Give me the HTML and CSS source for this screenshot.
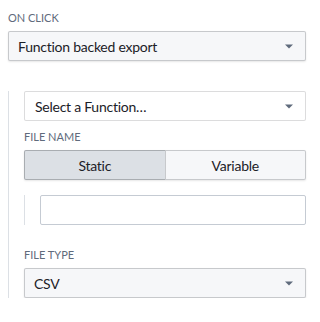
FILE: index.html
```html
<!DOCTYPE html>
<html lang="en">
<head>
  <meta charset="UTF-8">
  <title>Export settings</title>
  <link rel="stylesheet" href="styles.css">
</head>
<body>
  <div class="panel">
    <div class="field-label">On click</div>
    <div class="select select-filled">
      <span>Function backed export</span>
      <svg class="caret" width="16" height="16" viewBox="0 0 16 16"><path d="M4 6.5h8l-4 4z"/></svg>
    </div>

    <div class="nested">
      <div class="select select-plain">
        <span>Select a Function…</span>
        <svg class="caret" width="16" height="16" viewBox="0 0 16 16"><path d="M4 6.5h8l-4 4z"/></svg>
      </div>

      <div class="field-label">File name</div>
      <div class="segmented">
        <button class="seg-btn active">Static</button>
        <button class="seg-btn">Variable</button>
      </div>

      <div class="nested inner">
        <input class="text-input" type="text">
      </div>

      <div class="field-label">File type</div>
      <div class="select select-filled">
        <span>CSV</span>
        <svg class="caret" width="16" height="16" viewBox="0 0 16 16"><path d="M4 6.5h8l-4 4z"/></svg>
      </div>
    </div>
  </div>
</body>
</html>
```

FILE: styles.css
```css
/* === BASE === */
body {
  margin: 0;
  padding: 0;
  background: #fff;
  color: #1c2127;
  font-family: 'Lato', 'Open Sans', sans-serif;
  font-size: 14px;
  letter-spacing: -0.25px;
}
.panel {
  padding: 10px 14px 0 8px;
}

/* === LABELS === */
.field-label {
  font-size: 11px;
  line-height: 15px;
  letter-spacing: 0;
  text-transform: uppercase;
  color: #5f6b7c;
  margin: 0 0 6px;
}

/* === SELECTS === */
.select {
  display: flex;
  align-items: center;
  justify-content: space-between;
  height: 30px;
  box-sizing: border-box;
  padding: 0 9px 0 10px;
  border-radius: 2px;
}
.select-filled {
  background-color: #f6f7f9;
  box-shadow: inset 0 0 0 1px rgba(17, 20, 24, 0.2), 0 1px 2px rgba(17, 20, 24, 0.1);
}
.select-plain {
  background-color: #fff;
  box-shadow: inset 0 0 0 1px rgba(17, 20, 24, 0.15);
  padding-left: 11px;
  margin-bottom: 8px;
}
.caret {
  fill: #5f6b7c;
  flex-shrink: 0;
}

/* === NESTED BLOCKS === */
.nested {
  margin-top: 30px;
  border-left: 1px solid #dce0e5;
  padding-left: 15px;
}
.nested.inner {
  margin-top: 15px;
  margin-bottom: 22px;
}

/* === SEGMENTED CONTROL === */
.segmented {
  display: flex;
  box-shadow: 0 1px 2px rgba(17, 20, 24, 0.1);
  border-radius: 2px;
}
.seg-btn {
  flex: 1;
  height: 30px;
  border: none;
  margin: 0;
  font: inherit;
  letter-spacing: inherit;
  color: #1c2127;
  background-color: #f6f7f9;
  box-shadow: inset 0 0 0 1px rgba(17, 20, 24, 0.2);
}
.seg-btn:first-child {
  border-radius: 2px 0 0 2px;
}
.seg-btn:last-child {
  border-radius: 0 2px 2px 0;
  margin-left: -1px;
}
.seg-btn.active {
  background-color: #dce0e5;
  box-shadow: inset 0 0 0 1px rgba(17, 20, 24, 0.25);
}

/* === TEXT INPUT === */
.text-input {
  display: block;
  width: 100%;
  height: 30px;
  box-sizing: border-box;
  border: 1px solid #c5cbd3;
  border-radius: 2px;
  margin: 0;
  font: inherit;
}
```
